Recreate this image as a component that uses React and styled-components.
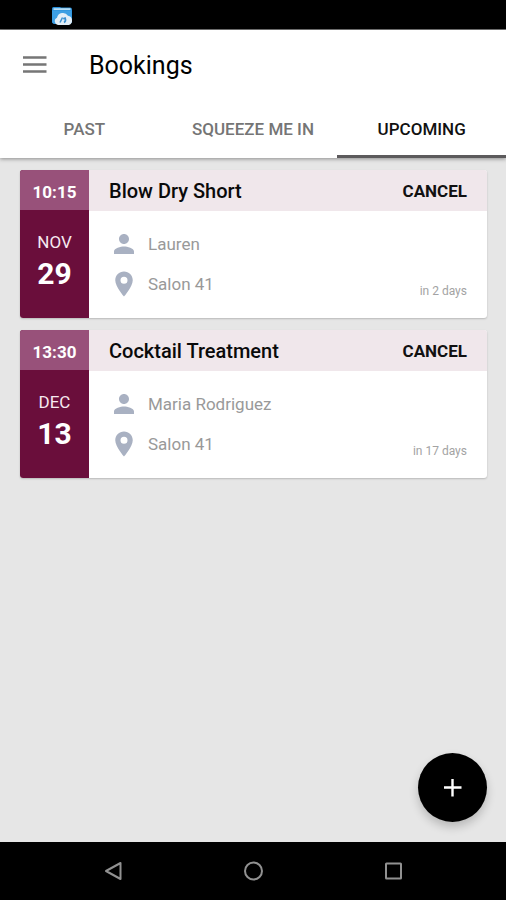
import React, { useState } from "react";
import styled, { createGlobalStyle } from "styled-components";
import { MdPerson } from "react-icons/md";

const tabs = ["Past", "Squeeze me in", "Upcoming"];

const bookings = [
    {
        id: 1,
        time: "10:15",
        month: "Nov",
        day: "29",
        title: "Blow Dry Short",
        stylist: "Lauren",
        place: "Salon 41",
        due: "in 2 days",
    },
    {
        id: 2,
        time: "13:30",
        month: "Dec",
        day: "13",
        title: "Cocktail Treatment",
        stylist: "Maria Rodriguez",
        place: "Salon 41",
        due: "in 17 days",
    },
];

const CloudFolderIcon = () => (
    <svg width="22" height="20" viewBox="0 0 22 20" aria-hidden="true">
        <path d="M1 2.5Q1 1 2.5 1H9l1 .5h9q2 0 2 2v12q0 2-2 2H3q-2 0-2-2z" fill="#2b8fd8" />
        <path d="M2.500 2.200h17v1.800h-17z" fill="#b5dcf5" />
        <path d="M1 4.500h19.500V15q0 3-3 3H4q-3 0-3-3z" fill="#3d9fe4" />
        <path
            d="M7 19a3.800 3.800 0 0 1-1-7.200A6 6 0 0 1 17 9.800 4.800 4.800 0 0 1 18 19z"
            fill="#e3eef7"
        />
        <path
            d="M9 16.500l2.500-5M13 16.500q2.500-1.500 1.200-4.500l-2 .8"
            fill="none"
            stroke="#3a8fd0"
            strokeWidth="1.500"
        />
    </svg>
);

const MenuIcon = () => (
    <svg width="24" height="18" viewBox="0 0 24 18" aria-hidden="true">
        <path d="M0 1.500h23.500M0 8.500h23.500M0 15.500h23.500" stroke="#767676" strokeWidth="2.400" />
    </svg>
);

const PinIcon = () => (
    <svg width="30" height="30" viewBox="0 0 24 24" fill="currentColor" aria-hidden="true">
        <path d="M12 2C8.130 2 5 5.130 5 9c0 5.250 7 13 7 13s7-7.750 7-13c0-3.870-3.130-7-7-7zm0 9.800a2.800 2.800 0 1 1 0-5.600 2.800 2.800 0 0 1 0 5.600z" />
    </svg>
);

const BookingCard = ({ booking }) => (
    <Card>
        <DateColumn>
            <Time>{booking.time}</Time>
            <Month>{booking.month}</Month>
            <Day>{booking.day}</Day>
        </DateColumn>
        <Details>
            <CardHeader>
                <CardTitle>{booking.title}</CardTitle>
                <CancelButton type="button">Cancel</CancelButton>
            </CardHeader>
            <CardBody>
                <InfoList>
                    <InfoRow>
                        <MdPerson size={30} aria-hidden="true" />
                        {booking.stylist}
                    </InfoRow>
                    <InfoRow>
                        <PinIcon />
                        {booking.place}
                    </InfoRow>
                </InfoList>
                <Due>{booking.due}</Due>
            </CardBody>
        </Details>
    </Card>
);

const App = () => {
    const [activeTab, setActiveTab] = useState("Upcoming");

    return (
        <Screen>
            <GlobalStyle />
            <StatusBar>
                <CloudFolderIcon />
            </StatusBar>
            <Header>
                <TitleBar>
                    <MenuButton type="button" aria-label="Open menu">
                        <MenuIcon />
                    </MenuButton>
                    <Title>Bookings</Title>
                </TitleBar>
                <Tabs role="tablist">
                    {tabs.map((tab) => (
                        <Tab
                            key={tab}
                            type="button"
                            role="tab"
                            aria-selected={tab === activeTab}
                            $active={tab === activeTab}
                            onClick={() => setActiveTab(tab)}
                        >
                            {tab}
                        </Tab>
                    ))}
                </Tabs>
            </Header>
            <Content>
                {bookings.map((booking) => (
                    <BookingCard key={booking.id} booking={booking} />
                ))}
                <AddButton type="button" aria-label="Add booking">
                    <svg width="18" height="18" viewBox="0 0 18 18" aria-hidden="true">
                        <path d="M8.500 0v17.500M0 8.500h17.500" stroke="#fff" strokeWidth="2.400" />
                    </svg>
                </AddButton>
            </Content>
            <SystemNav>
                <NavButton type="button" aria-label="Back">
                    <svg width="20" height="20" viewBox="0 0 20 20" aria-hidden="true">
                        <path d="M17.500 2v16L3 10z" />
                    </svg>
                </NavButton>
                <NavButton type="button" aria-label="Home">
                    <svg width="20" height="20" viewBox="0 0 20 20" aria-hidden="true">
                        <circle cx="10.500" cy="10" r="8.500" />
                    </svg>
                </NavButton>
                <NavButton type="button" aria-label="Recent apps">
                    <svg width="20" height="20" viewBox="0 0 20 20" aria-hidden="true">
                        <rect x="3" y="2.500" width="15" height="15" rx="0.500" />
                    </svg>
                </NavButton>
            </SystemNav>
        </Screen>
    );
};

const GlobalStyle = createGlobalStyle`
    * {
        box-sizing: border-box;
    }

    body {
        margin: 0;
        font-family: Roboto, "Liberation Sans", sans-serif;
    }

    button {
        padding: 0;
        border: 0;
        background: none;
        font-family: inherit;
        cursor: pointer;
    }
`;

const Screen = styled.div`
    display: flex;
    flex-direction: column;
    min-height: 100vh;
    background-color: #e6e6e6;
`;

const StatusBar = styled.div`
    display: flex;
    align-items: flex-end;
    height: 30px;
    padding: 0 51px 3px;
    background-color: #000;
    border-bottom: 1px solid #777;
`;

const Header = styled.header`
    position: relative;
    background-color: #fff;
    box-shadow: 0 1px 4px rgba(0, 0, 0, 0.4);
`;

const TitleBar = styled.div`
    display: flex;
    align-items: center;
    gap: 42px;
    height: 70px;
    padding: 0 23px;
`;

const MenuButton = styled.button`
    display: flex;
`;

const Title = styled.h1`
    margin: 0;
    padding-top: 2px;
    font-size: 25px;
    font-weight: 400;
    line-height: 32px;
    color: #000;
`;

const Tabs = styled.div`
    display: grid;
    grid-template-columns: repeat(3, 1fr);
`;

const Tab = styled.button`
    height: 58px;
    border-top: 3px solid transparent;
    border-bottom: 3px solid ${(props) => (props.$active ? "#5c5a5c" : "transparent")};
    color: ${(props) => (props.$active ? "#111" : "#757575")};
    font-size: 17px;
    font-weight: 500;
    text-transform: uppercase;
`;

const Content = styled.main`
    position: relative;
    flex: 1;
    display: flex;
    flex-direction: column;
    gap: 12px;
    padding: 12px 19px 108px 20px;
`;

const Card = styled.article`
    display: flex;
    min-height: 148px;
    overflow: hidden;
    border-radius: 3px;
    background-color: #fff;
    box-shadow: 0 1px 2px rgba(0, 0, 0, 0.2);
`;

const DateColumn = styled.div`
    flex: 0 0 69px;
    display: flex;
    flex-direction: column;
    background-color: #6a0e3b;
    color: #fff;
    text-align: center;
`;

const Time = styled.div`
    height: 40px;
    margin-bottom: 20px;
    padding-top: 4px;
    background-color: #98517a;
    font-size: 17px;
    font-weight: 700;
    line-height: 36px;
`;

const Month = styled.div`
    font-size: 17px;
    line-height: 24px;
    color: #f6e9f0;
    text-transform: uppercase;
`;

const Day = styled.div`
    font-size: 30px;
    font-weight: 700;
    line-height: 40px;
`;

const Details = styled.div`
    flex: 1;
    display: flex;
    flex-direction: column;
`;

const CardHeader = styled.div`
    display: flex;
    align-items: center;
    justify-content: space-between;
    height: 41px;
    padding: 0 20px;
    background-color: #f0e7eb;
`;

const CardTitle = styled.h2`
    margin: 0;
    font-size: 20px;
    font-weight: 500;
    line-height: 24px;
    color: #0a0a0a;
`;

const CancelButton = styled.button`
    color: #111;
    font-size: 17px;
    font-weight: 700;
    text-transform: uppercase;
`;

const CardBody = styled.div`
    flex: 1;
    display: flex;
    align-items: flex-end;
    justify-content: space-between;
    padding: 0 20px 19px;
`;

const InfoList = styled.div`
    display: flex;
    flex-direction: column;
    gap: 10px;
`;

const InfoRow = styled.div`
    display: flex;
    align-items: center;
    gap: 9px;
    font-size: 17px;
    line-height: 24px;
    color: #999;

    svg {
        color: #a9b1c2;
    }
`;

const Due = styled.div`
    font-size: 12px;
    line-height: 16px;
    color: #a3a3a3;
`;

const AddButton = styled.button`
    position: absolute;
    right: 19px;
    bottom: 20px;
    display: flex;
    align-items: center;
    justify-content: center;
    width: 69px;
    height: 69px;
    border-radius: 50%;
    background-color: #000;
    box-shadow: 0 5px 10px rgba(0, 0, 0, 0.2);
`;

const SystemNav = styled.nav`
    display: grid;
    grid-template-columns: repeat(3, 1fr);
    height: 58px;
    padding: 0 43px;
    background-color: #000;
`;

const NavButton = styled.button`
    display: flex;
    align-items: center;
    justify-content: center;

    svg {
        fill: none;
        stroke: #919191;
        stroke-width: 2;
        stroke-linejoin: round;
    }
`;

export default App;
